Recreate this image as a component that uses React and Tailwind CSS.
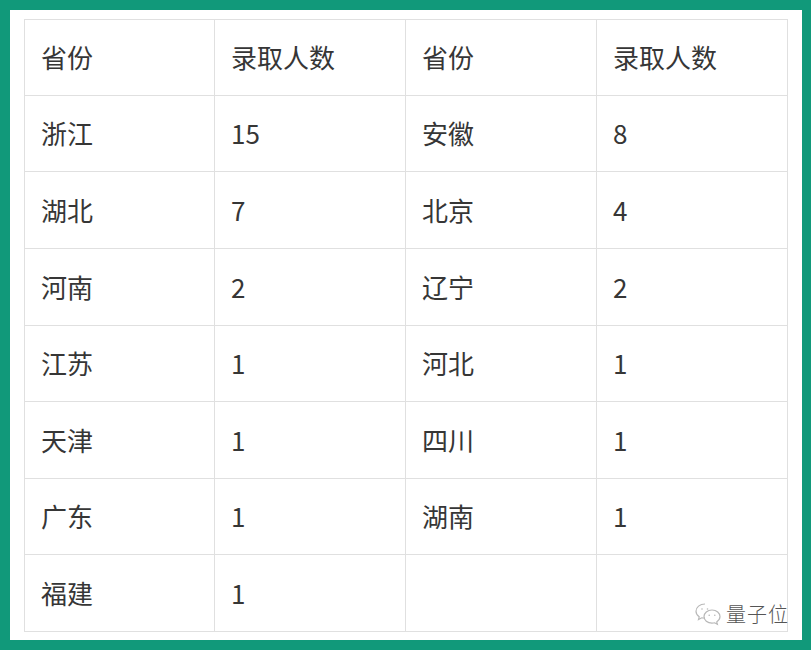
import React from "react";

const rows = [
  ["省份", "录取人数", "省份", "录取人数"],
  ["浙江", "15", "安徽", "8"],
  ["湖北", "7", "北京", "4"],
  ["河南", "2", "辽宁", "2"],
  ["江苏", "1", "河北", "1"],
  ["天津", "1", "四川", "1"],
  ["广东", "1", "湖南", "1"],
  ["福建", "1", "", ""],
];

const heights = ["h-[76px]", "h-[76px]", "h-[77px]", "h-[77px]", "h-[76px]", "h-[77px]", "h-[76px]", "h-[77px]"];
const widths = ["w-[190px]", "w-[191px]", "w-[191px]", "w-[191px]"];

function WeChat() {
  return (
    <svg width="28" height="24" viewBox="0 0 28 24" fill="none" stroke="#b8b8b8" strokeWidth="1.2">
      <path d="M11 2C5.8 2 2 5.3 2 9.3c0 2.3 1.2 4.2 3.2 5.5L4.5 17.5l3.2-1.7c1 .3 2.1.4 3.3.4" />
      <path d="M18 8c-4.6 0-8 3-8 6.6s3.4 6.6 8 6.6c.9 0 1.8-.1 2.6-.4l2.8 1.5-.7-2.4c1.9-1.2 3.3-3.1 3.3-5.3C26 11 22.6 8 18 8z" />
      <circle cx="15.2" cy="13.2" r="0.8" fill="#b8b8b8" stroke="none" />
      <circle cx="20.8" cy="13.2" r="0.8" fill="#b8b8b8" stroke="none" />
      <circle cx="8" cy="7" r="0.8" fill="#b8b8b8" stroke="none" />
      <circle cx="13.5" cy="7" r="0.8" fill="#b8b8b8" stroke="none" />
    </svg>
  );
}

export default function App() {
  return (
    <div
      className="w-[811px] h-[650px] bg-[#11997a] pt-[10px] pl-[10px] pr-[9px] pb-[10px]"
      style={{ fontFamily: '"Noto Sans CJK SC", "Noto Sans", sans-serif' }}
    >
      <div className="relative w-full h-full bg-white pt-[9px] pl-[14px]">
        <div className="inline-flex flex-col border-l border-t border-[#e0e0e0]">
          {rows.map((r, i) => (
            <div key={i} className="flex">
              {r.map((c, j) => (
                <div
                  key={j}
                  className={`${widths[j]} ${heights[i]} border-r border-b border-[#e0e0e0] flex items-center pl-4 pb-[2px] text-[26px] text-[#363636]`}
                >
                  {c}
                </div>
              ))}
            </div>
          ))}
        </div>
        <div className="absolute left-[684px] top-[592px] flex items-center gap-[4px]">
          <WeChat />
          <span className="text-[20px] font-light text-[#555555] tracking-[1px] leading-none">量子位</span>
        </div>
      </div>
    </div>
  );
}
